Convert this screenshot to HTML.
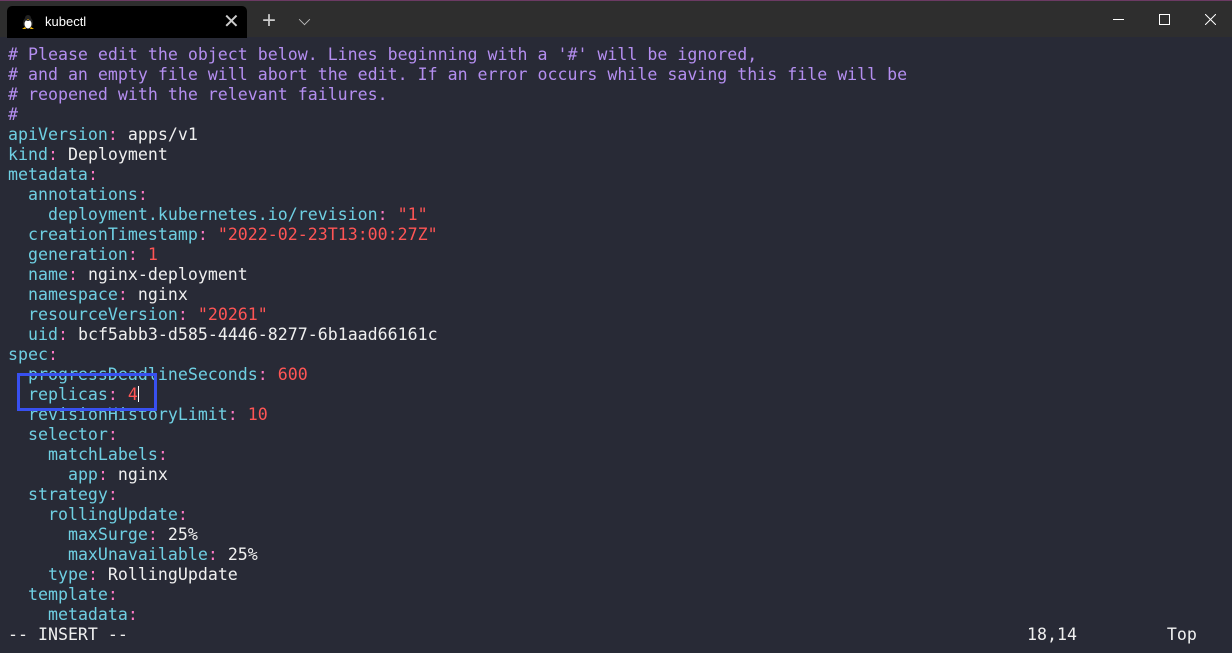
<!DOCTYPE html>
<html><head><style>
body{margin:0;width:1232px;height:653px;background:#282a36;overflow:hidden;font-family:"Liberation Mono",monospace;}
.bar{position:absolute;left:0;top:0;width:1232px;height:37px;background:#2e2e2e;border-top:1px solid #6b3a63;box-sizing:border-box}
.tab{position:absolute;left:7px;top:5px;width:240px;height:32px;background:#000;border-radius:5px 5px 0 0}
.tab .t{position:absolute;left:38px;top:8px;color:#fff;font:13px "Liberation Sans",sans-serif}
.tab .x{position:absolute;left:216px;top:3px;color:#ccc;font:20px "Liberation Sans",sans-serif}
.pl{position:absolute;left:262px;top:6px;color:#ccc;font:24px "Liberation Sans",sans-serif}
.dn{position:absolute;left:300px;top:14px;width:8px;height:8px;border-right:1.3px solid #bbb;border-bottom:1.3px solid #bbb;transform:rotate(45deg) scale(.9,.9);transform-origin:center}
pre{position:absolute;left:8px;top:45px;margin:0;font-size:16.6px;line-height:20px;color:#f0f0f0}
.c{color:#b48ef0}.k{color:#6fd0e3}.p{color:#ff79c6}.r{color:#ff5555}
.box{position:absolute;left:17px;top:373px;width:140px;height:38px;border:3px solid #3850f0;box-sizing:border-box}
.cur{position:absolute;left:138px;top:386px;width:1px;height:16px;background:#fff}
</style></head><body>
<div class="bar">
<div class="tab">
<svg style="position:absolute;left:14px;top:8px" width="14" height="16" viewBox="0 0 14 16"><ellipse cx="7" cy="9" rx="5" ry="6" fill="#222"/><ellipse cx="7" cy="10" rx="3.5" ry="4.5" fill="#fff"/><circle cx="7" cy="4" r="3" fill="#222"/><path d="M1 15l3-2 1 2zM13 15l-3-2-1 2z" fill="#f5b800"/><path d="M6 5h2l-1 1z" fill="#f5b800"/></svg>
<span class="t">kubectl</span><span class="x">✕</span></div>
<span class="pl">+</span><div class="dn"></div>
<div style="position:absolute;left:1113px;top:18px;width:11px;height:1px;background:#fff"></div>
<div style="position:absolute;left:1159px;top:13px;width:9px;height:9px;border:1px solid #fff"></div>
<svg style="position:absolute;left:1205px;top:13px" width="11" height="11"><path d="M0 0L11 11M11 0L0 11" stroke="#fff" stroke-width="1"/></svg>
</div>
<pre><span class="c"># Please edit the object below. Lines beginning with a '#' will be ignored,
# and an empty file will abort the edit. If an error occurs while saving this file will be
# reopened with the relevant failures.
#</span>
<span class="k">apiVersion</span><span class="p">:</span> apps/v1
<span class="k">kind</span><span class="p">:</span> Deployment
<span class="k">metadata</span><span class="p">:</span>
  <span class="k">annotations</span><span class="p">:</span>
    <span class="k">deployment.kubernetes.io/revision</span><span class="p">:</span> <span class="r">"1"</span>
  <span class="k">creationTimestamp</span><span class="p">:</span> <span class="r">"2022-02-23T13:00:27Z"</span>
  <span class="k">generation</span><span class="p">:</span> <span class="r">1</span>
  <span class="k">name</span><span class="p">:</span> nginx-deployment
  <span class="k">namespace</span><span class="p">:</span> nginx
  <span class="k">resourceVersion</span><span class="p">:</span> <span class="r">"20261"</span>
  <span class="k">uid</span><span class="p">:</span> bcf5abb3-d585-4446-8277-6b1aad66161c
<span class="k">spec</span><span class="p">:</span>
  <span class="k">progressDeadlineSeconds</span><span class="p">:</span> <span class="r">600</span>
  <span class="k">replicas</span><span class="p">:</span> <span class="r">4</span>
  <span class="k">revisionHistoryLimit</span><span class="p">:</span> <span class="r">10</span>
  <span class="k">selector</span><span class="p">:</span>
    <span class="k">matchLabels</span><span class="p">:</span>
      <span class="k">app</span><span class="p">:</span> nginx
  <span class="k">strategy</span><span class="p">:</span>
    <span class="k">rollingUpdate</span><span class="p">:</span>
      <span class="k">maxSurge</span><span class="p">:</span> 25%
      <span class="k">maxUnavailable</span><span class="p">:</span> 25%
    <span class="k">type</span><span class="p">:</span> RollingUpdate
  <span class="k">template</span><span class="p">:</span>
    <span class="k">metadata</span><span class="p">:</span>
-- INSERT --                                                                                          18,14         Top</pre>
<div class="box"></div><div class="cur"></div>
</body></html>
